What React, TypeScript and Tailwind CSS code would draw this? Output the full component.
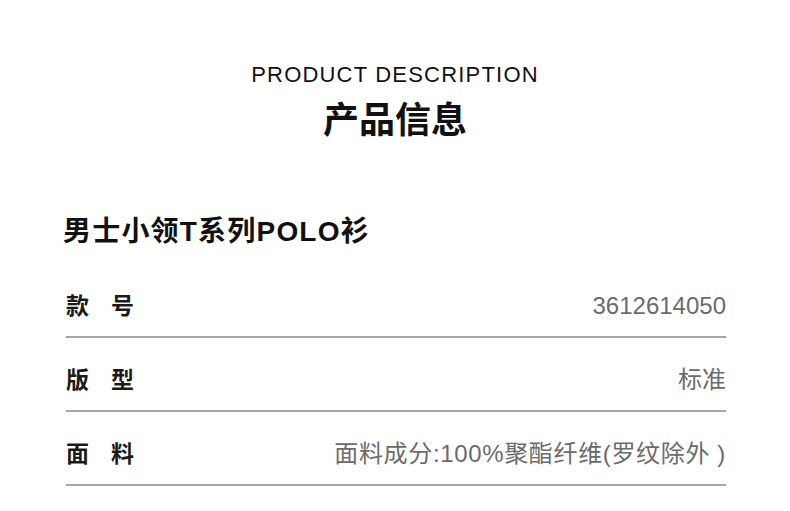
const rows = [
  { label: ["款", "号"], value: "3612614050", wide: false },
  { label: ["版", "型"], value: "标准", wide: false },
  { label: ["面", "料"], value: "面料成分:100%聚酯纤维(罗纹除外 )", wide: true },
];

const App = () => {
  return (
    <section
      className="w-[790px] h-[511px] bg-white overflow-hidden"
      style={{ fontFamily: '"Liberation Sans", "Noto Sans CJK SC", sans-serif' }}
    >
      <div className="flex flex-col items-center pt-[61px]">
        <p className="text-[22px] leading-[28px] tracking-[1.2px] text-[#111]">PRODUCT DESCRIPTION</p>
        <h1 className="mt-[10px] text-[36px] leading-[44px] font-bold text-[#111]">产品信息</h1>
      </div>

      <h2 className="mt-[71px] ml-[63px] text-[28px] leading-[36px] font-bold tracking-[1.2px] text-[#111]">
        男士小领T系列POLO衫
      </h2>

      <ul className="ml-[66px] mr-[64px] mt-[14px]">
        {rows.map((row) => (
          <li
            key={row.value}
            className="flex items-center justify-between pt-[26px] pb-[14px] border-b-2 border-[#a6a6a6]"
          >
            <div className="flex gap-[22px] text-[23px] leading-[32px] font-bold text-[#1a1a1a]">
              <span>{row.label[0]}</span>
              <span>{row.label[1]}</span>
            </div>
            <span
              className={`text-[24px] leading-[32px] text-[#6b6b6b] ${
                row.wide ? "tracking-[0.65px]" : ""
              }`}
            >
              {row.value}
            </span>
          </li>
        ))}
      </ul>
    </section>
  );
};

export default App;
